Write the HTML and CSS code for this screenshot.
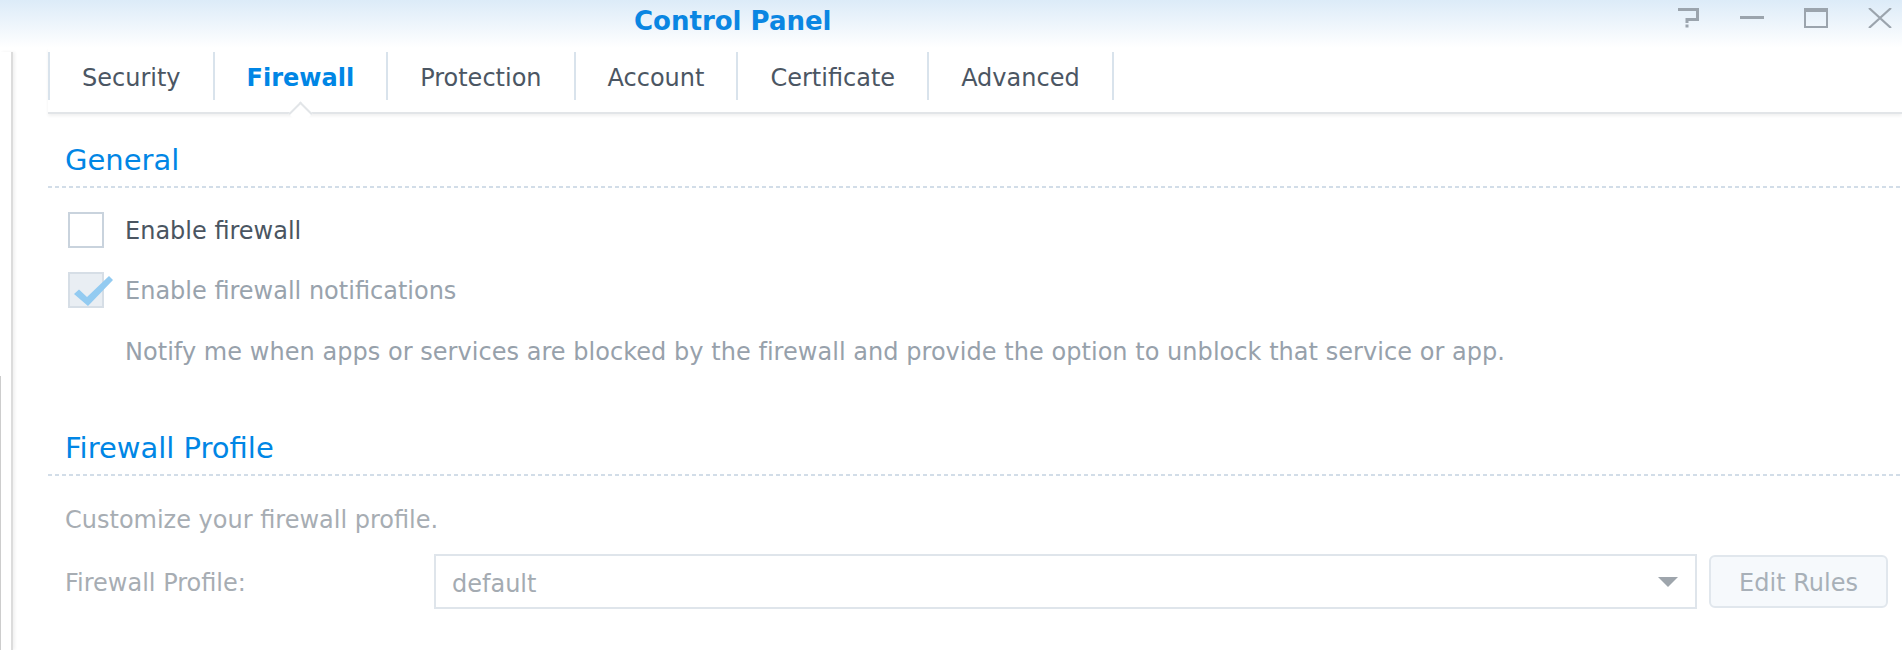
FILE: index.html
```html
<!DOCTYPE html>
<html>
    <head>
        <meta charset="utf-8">
        <title>Control Panel</title>
        <link rel="stylesheet" href="styles.css">
    </head>
    <body>
        <div class="titlebar">
            <span class="title">Control Panel</span>
            <div class="winbtns">
                <!-- help -->
                <svg viewBox="0 0 24 20"><path d="M2 1.5 H21.5 V11.5 H11 V15" fill="none" stroke="#9ba4ad" stroke-width="3"/><rect x="9.5" y="16.5" width="3" height="3" fill="#9ba4ad"/></svg>
                <!-- minimize -->
                <svg viewBox="0 0 24 20"><rect x="0" y="8" width="24" height="3" fill="#9ba4ad"/></svg>
                <!-- maximize -->
                <svg viewBox="0 0 24 20"><rect x="1" y="2" width="22" height="17" fill="none" stroke="#9ba4ad" stroke-width="2"/><rect x="0" y="0" width="24" height="4" fill="#9ba4ad"/></svg>
                <!-- close -->
                <svg viewBox="0 0 24 20"><path d="M1 0 L23 20 M23 0 L1 20" stroke="#9ba4ad" stroke-width="2.2"/></svg>
            </div>
        </div>

        <div class="window">
            <div class="edge"><div class="edge-low"></div></div>

            <div class="main">
                <div class="tabbar">
                    <div class="tab">Security</div>
                    <div class="tab active">Firewall</div>
                    <div class="tab">Protection</div>
                    <div class="tab">Account</div>
                    <div class="tab">Certificate</div>
                    <div class="tab">Advanced</div>
                </div>

                <div class="section-head">General</div>

                <div class="check-row">
                    <div class="box"></div>
                    <span>Enable firewall</span>
                </div>
                <div class="check-row disabled">
                    <div class="box checked">
                        <svg class="tick" viewBox="0 0 42 36"><path d="M2 20 L7 15.5 L15 23 L37 2 L41 6 L16 32 Z" fill="#93cbf1"/></svg>
                    </div>
                    <span>Enable firewall notifications</span>
                </div>
                <p class="desc">Notify me when apps or services are blocked by the firewall and provide the option to unblock that service or app.</p>

                <div class="section-head second">Firewall Profile</div>

                <p class="note">Customize your firewall profile.</p>

                <div class="form-row">
                    <div class="form-label">Firewall Profile:</div>
                    <div class="select">
                        <span>default</span>
                        <svg class="caret" viewBox="0 0 20 10"><path d="M0 0 H20 L10 10 Z" fill="#9ea5ac"/></svg>
                    </div>
                    <div class="btn">Edit Rules</div>
                </div>
            </div>
        </div>
    </body>
</html>
```

FILE: styles.css
```css
body {
    margin: 0;
    font-family: "DejaVu Sans", Verdana, sans-serif;
    background: #fff;
    overflow: hidden;
}

/* title bar */
.titlebar {
    display: flex;
    align-items: flex-start;
    height: 48px;
    box-sizing: border-box;
    padding: 6px 10px 0 634px;
    background: linear-gradient(#dcebf8, #ffffff);
}
.title {
    font-weight: bold;
    font-size: 26px;
    line-height: 30px;
    color: #0a86e2;
}
.winbtns {
    margin-left: auto;
    display: flex;
    gap: 40px;
    margin-top: 2px;
}
.winbtns svg {
    width: 24px;
    height: 20px;
    display: block;
}

/* window body */
.window {
    display: flex;
    height: calc(100vh - 48px);
}
.edge {
    width: 11px;
    flex: none;
    margin-top: 4px;
    display: flex;
    flex-direction: column;
    border-right: 2px solid #dcdcdc;
    box-shadow: 2px 0 3px rgba(0, 0, 0, 0.06);
}
.edge-low {
    margin-top: 324px;
    flex: 1;
    width: 1px;
    background: #cdcdcd;
}
.main {
    flex: 1;
    min-width: 0;
    padding-left: 35px;
}

/* tabs */
.tabbar {
    display: flex;
    align-items: flex-start;
    height: 60px;
    padding-top: 4px;
    border-bottom: 2px solid #e2e5e8;
    box-shadow: 0 2px 3px rgba(0, 0, 0, 0.06);
}
.tab {
    position: relative;
    height: 46px;
    line-height: 48px;
    padding: 2px 32px 0;
    border-left: 2px solid #d9e3ec;
    font-size: 24px;
    color: #4b5663;
}
.tab:last-child {
    border-right: 2px solid #d9e3ec;
}
.tab.active {
    color: #0086e5;
    font-weight: bold;
}
.tab.active::after {
    content: "";
    position: absolute;
    left: 50%;
    top: 52.5px;
    width: 17px;
    height: 17px;
    margin-left: -8.5px;
    box-sizing: border-box;
    background: #fff;
    border-top: 2px solid #e2e5e8;
    border-left: 2px solid #e2e5e8;
    transform: rotate(45deg);
}

/* sections */
.section-head {
    margin-top: 28px;
    padding: 0 0 10px 17px;
    font-size: 29px;
    line-height: 36px;
    color: #0086e5;
    background: linear-gradient(to right, #d2dde8 4px, transparent 4px) 0 100% / 7px 2px repeat-x;
}
.section-head.second {
    margin-top: 60px;
}

.check-row {
    display: flex;
    align-items: flex-start;
    gap: 21px;
    padding-left: 20px;
    margin-top: 24px;
    font-size: 24px;
    line-height: 34px;
    color: #4a5561;
}
.check-row span {
    padding-top: 2px;
}
.check-row.disabled {
    color: #99a3ad;
}
.box {
    position: relative;
    width: 36px;
    height: 36px;
    box-sizing: border-box;
    border: 2px solid #c9d3dd;
    background: #fff;
}
.box.checked {
    background: #e9eef3;
    border-color: #d6dee6;
}
.tick {
    position: absolute;
    left: 2px;
    top: 0px;
    width: 42px;
    height: 36px;
}

.desc {
    margin: 26px 0 0;
    padding-left: 77px;
    font-size: 24px;
    line-height: 36px;
    letter-spacing: 0.04px;
    color: #97a1ab;
}
.note {
    margin: 26px 0 0;
    padding-left: 17px;
    font-size: 24px;
    line-height: 36px;
    color: #a7adb3;
}

/* profile row */
.form-row {
    display: flex;
    align-items: flex-start;
    gap: 12px;
    margin-top: 16px;
    padding: 0 14px 0 17px;
    font-size: 24px;
}
.form-label {
    width: 357px;
    flex: none;
    line-height: 55px;
    padding-top: 2px;
    color: #a7adb3;
}
.select {
    flex: 1;
    height: 55px;
    box-sizing: border-box;
    display: flex;
    align-items: center;
    padding: 4px 17px 0 16px;
    border: 2px solid #dfe5eb;
    color: #a4abb2;
}
.caret {
    margin-left: auto;
    width: 20px;
    height: 10px;
    margin-top: -4px;
}
.btn {
    width: 179px;
    height: 53px;
    margin-top: 1px;
    box-sizing: border-box;
    display: flex;
    align-items: center;
    justify-content: center;
    padding-top: 2px;
    border: 2px solid #e1e7ed;
    border-radius: 6px;
    background: #f6f9fc;
    color: #a8b0b8;
}
```
